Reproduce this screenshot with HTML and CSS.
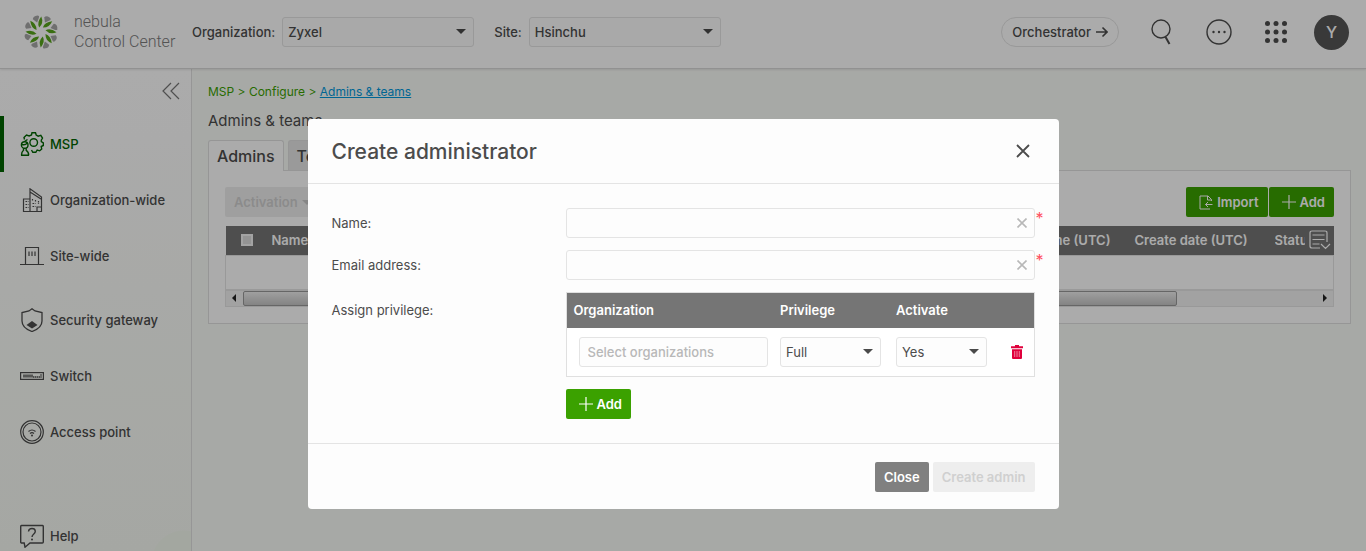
FILE: index.html
```
<!DOCTYPE html>
<html lang="en">
<head>
    <meta charset="UTF-8">
    <meta name="viewport" content="width=device-width, initial-scale=1.0">
    <title>Nebula Control Center</title>
    <link rel="stylesheet" href="styles.css">
</head>
<body>

    <!-- Top bar -->
    <header class="topbar">
        <a class="logo" href="#">
            <svg width="34" height="34" viewBox="-17 -17 34 34">
                <defs>
                    <g id="petal">
                        <path d="M3.200-14.800Q5.500-16.800 8.300-14.800T8.500-11.500L4-9.500Z" fill="#a6a6a6"/>
                        <path d="M.3-15.500Q3-9-1.800-4.500Q-4.500-9.500.3-15.500Z" fill="#57a51c"/>
                    </g>
                </defs>
                <use href="#petal"/>
                <use href="#petal" transform="rotate(45)"/>
                <use href="#petal" transform="rotate(90)"/>
                <use href="#petal" transform="rotate(135)"/>
                <use href="#petal" transform="rotate(180)"/>
                <use href="#petal" transform="rotate(225)"/>
                <use href="#petal" transform="rotate(270)"/>
                <use href="#petal" transform="rotate(315)"/>
            </svg>
            <span class="logo-text">nebula<br>Control Center</span>
        </a>
        <div class="picker">
            <label for="org">Organization:</label>
            <span class="select"><select id="org"><option>Zyxel</option></select></span>
        </div>
        <div class="picker">
            <label for="site">Site:</label>
            <span class="select"><select id="site"><option>Hsinchu</option></select></span>
        </div>
        <div class="tools">
            <button class="pill">Orchestrator
                <svg width="12" height="12" viewBox="0 0 12 12"><path d="M0 6h11M6.500 1.500L11 6l-4.500 4.500" fill="none" stroke="currentColor" stroke-width="1.600"/></svg>
            </button>
            <button class="icon-btn" aria-label="Search">
                <svg width="22" height="26" viewBox="0 0 22 26"><g fill="none" stroke="currentColor"><circle cx="10" cy="10" r="9" stroke-width="1.400"/><path d="M14.500 18l4 7" stroke-width="2"/></g></svg>
            </button>
            <button class="icon-btn" aria-label="More">
                <svg width="26" height="26" viewBox="0 0 26 26"><circle cx="13" cy="13" r="12" fill="none" stroke="currentColor" stroke-width="1.400"/><circle cx="7.500" cy="13" r="1.200"/><circle cx="13" cy="13" r="1.200"/><circle cx="18.500" cy="13" r="1.200"/></svg>
            </button>
            <button class="icon-btn" aria-label="Apps">
                <svg width="22" height="22" viewBox="0 0 22 22"><circle cx="2.500" cy="2.500" r="2.500"/><circle cx="11" cy="2.500" r="2.500"/><circle cx="19.500" cy="2.500" r="2.500"/><circle cx="2.500" cy="11" r="2.500"/><circle cx="11" cy="11" r="2.500"/><circle cx="19.500" cy="11" r="2.500"/><circle cx="2.500" cy="19.500" r="2.500"/><circle cx="11" cy="19.500" r="2.500"/><circle cx="19.500" cy="19.500" r="2.500"/></svg>
            </button>
            <button class="avatar">Y</button>
        </div>
    </header>

    <div class="layout">

        <!-- Sidebar -->
        <nav class="sidebar">
            <button class="collapse" aria-label="Collapse menu">
                <svg width="18" height="18" viewBox="0 0 18 18"><path d="M9 1L1 9l8 8M17 1L9 9l8 8" fill="none" stroke="currentColor" stroke-width="1.200"/></svg>
            </button>
            <a class="item active" href="#">
                <svg width="24" height="24" viewBox="0 0 24 24"><g fill="none" stroke="currentColor" stroke-width="1.400"><path d="M4.500 7.500L4 5.500 6.500 3l2.700 1L11.500 3 12 .7h3.500L16.200 3l2 1.200 2.600-.8L22.500 6l-1.200 2.200v1.500l2 1.100v2.700l-2.100 1 .5 2.500-2 1.800-2.500-.8-1.400 2.300h-3L11.500 18"/><circle cx="13.700" cy="10.500" r="3.800"/><circle cx="4.700" cy="13" r="3.300"/><path d="M4.500 9.500l3-2M1.700 12.500q4 1 5.300-1.500M1.500 23.300q0-3.500 2-5v-2M8.700 23.300q0-3.500-2.500-5v-2M1 23.300h8"/></g></svg>
                MSP
            </a>
            <a class="item" href="#">
                <svg width="24" height="24" viewBox="0 0 24 24"><g fill="none" stroke="currentColor" stroke-width="1.200"><path d="M10 11H3.500v12.500h18V9L10 .8v22.700M10 4l11 7M17 23v-4h4"/><path d="M5.500 13.500h3M5.500 16.500h3M5.500 19.500h3M12.500 11v2M15.500 12v2M12.500 15.500h3M12.500 18.500h3M18.500 13v3" stroke-dasharray="1.500 .8"/></g></svg>
                Organization-wide
            </a>
            <a class="item" href="#">
                <svg width="24" height="24" viewBox="0 0 24 24"><g fill="none" stroke="currentColor" stroke-width="1.200"><path d="M0 20.500h24M5.500 20V3.500h13V20M9 7.500V12M12 7.500V12M15 7.500V12"/></g></svg>
                Site-wide
            </a>
            <a class="item group" href="#">
                <svg width="24" height="24" viewBox="0 0 24 24"><path d="M12 .8L15 3l7 1.500V13q0 7-10 10.500Q2 20 2 13V4.500L9 3z" fill="none" stroke="currentColor" stroke-width="1.300"/><path d="M12 13l5.500 4-5.500 3.500L6.500 17z"/></svg>
                Security gateway
            </a>
            <a class="item" href="#">
                <svg width="24" height="24" viewBox="0 0 24 24"><rect x=".6" y="8.600" width="22.800" height="6.800" fill="none" stroke="currentColor" stroke-width="1.200"/><path d="M3 12h10" stroke="currentColor" stroke-width="3" opacity=".7"/><path d="M13 13h7" stroke="currentColor" stroke-width="1.500" stroke-dasharray="1.500 .5"/><path d="M21 10v4" stroke="currentColor"/></svg>
                Switch
            </a>
            <a class="item" href="#">
                <svg width="24" height="24" viewBox="0 0 24 24"><g fill="none" stroke="currentColor" stroke-width="1.200"><circle cx="12" cy="12" r="11.300"/><circle cx="12" cy="12" r="9"/><path d="M8.500 11.500q3.500-3 7 0M10 13.500q2-1.600 4 0"/></g><circle cx="12" cy="15.500" r="1"/></svg>
                Access point
            </a>
            <a class="item help" href="#">
                <svg width="24" height="24" viewBox="0 0 24 24"><g fill="none" stroke="currentColor" stroke-width="1.400"><path d="M1.500 1.500h21a1 1 0 0 1 .8 1v15.500a1 1 0 0 1-1 1H10l-5 4.200-.8-4.200H1.700a1 1 0 0 1-1-1v-15.500a1 1 0 0 1 .8-1z"/><path d="M8.500 7.500q.3-3 3.500-3t3.300 2.800q0 1.500-1.500 2.700-1.800 1.400-1.800 3"/></g><circle cx="12" cy="15.500" r="1"/></svg>
                Help
            </a>
        </nav>

        <!-- Page content -->
        <main class="content">
            <div class="breadcrumb">MSP &gt; Configure &gt; <a href="#">Admins &amp; teams</a></div>
            <h1>Admins &amp; teams</h1>
            <div class="tabs">
                <button class="tab current">Admins</button>
                <button class="tab">Teams</button>
            </div>
            <section class="panel">
                <div class="toolbar">
                    <button class="btn disabled" disabled>Activation <span class="caret"></span></button>
                    <div class="toolbar-right">
                        <button class="btn green">
                            <svg width="14" height="15" viewBox="0 0 14 15"><path d="M12.500 6V4.500L9 1H1v13h10M8.500 1v4h4M13.500 9.500H6.500M9 7l-2.500 2.500L9 12" fill="none" stroke="currentColor"/></svg>
                            Import
                        </button>
                        <button class="btn green">
                            <svg width="14" height="14" viewBox="0 0 14 14"><path d="M7 0v14M0 7h14" stroke="currentColor" stroke-width="1.200"/></svg>
                            Add
                        </button>
                    </div>
                </div>
                <table class="admins">
                    <thead>
                        <tr>
                            <th class="col-check"><input type="checkbox" aria-label="Select all"></th>
                            <th>Name</th>
                            <th class="col-access">Last access time (UTC)</th>
                            <th class="col-create">Create date (UTC)</th>
                            <th class="col-status">Status</th>
                            <th class="col-menu">
                                <svg width="22" height="20" viewBox="0 0 22 20"><g fill="none" stroke="currentColor" stroke-width="1.200"><path d="M18 12V3q0-2-2-2H3Q1 1 1 3v13q0 2 2 2h8M3.500 5h12M3.500 9.500h12M3.500 14h7M12 14l4.500 4.500L21 14"/></g></svg>
                            </th>
                        </tr>
                    </thead>
                    <tbody>
                        <tr><td colspan="6"></td></tr>
                    </tbody>
                </table>
                <div class="scroller">
                    <span class="arrow left"></span>
                    <div class="track"><div class="thumb"></div></div>
                    <span class="arrow right"></span>
                </div>
            </section>
        </main>
    </div>

    <!-- Create administrator dialog -->
    <div class="overlay">
        <form class="modal" role="dialog" aria-labelledby="modal-title">
            <div class="modal-head">
                <h2 id="modal-title">Create administrator</h2>
                <button type="button" class="icon-btn" aria-label="Close dialog">
                    <svg width="14" height="14" viewBox="0 0 14 14"><path d="M1 1l12 12M13 1L1 13" stroke="currentColor" stroke-width="1.800"/></svg>
                </button>
            </div>
            <div class="modal-body">
                <label for="name">Name:</label>
                <div class="field required">
                    <input type="text" id="name">
                    <button type="button" class="clear" aria-label="Clear name"><svg width="10" height="10" viewBox="0 0 10 10"><path d="M.5.5l9 9M9.500.5l-9 9" stroke="currentColor" stroke-width="1.600"/></svg></button>
                </div>
                <label for="email">Email address:</label>
                <div class="field required">
                    <input type="text" id="email">
                    <button type="button" class="clear" aria-label="Clear email"><svg width="10" height="10" viewBox="0 0 10 10"><path d="M.5.5l9 9M9.500.5l-9 9" stroke="currentColor" stroke-width="1.600"/></svg></button>
                </div>
                <span class="privilege-label" id="privilege-label">Assign privilege:</span>
                <div>
                    <table class="privileges" aria-labelledby="privilege-label">
                        <thead>
                            <tr>
                                <th class="col-org">Organization</th>
                                <th class="col-priv">Privilege</th>
                                <th class="col-act">Activate</th>
                                <th></th>
                            </tr>
                        </thead>
                        <tbody>
                            <tr>
                                <td><input type="text" placeholder="Select organizations" aria-label="Organizations"></td>
                                <td><span class="select"><select aria-label="Privilege"><option>Full</option></select></span></td>
                                <td><span class="select narrow"><select aria-label="Activate"><option>Yes</option></select></span></td>
                                <td>
                                    <button type="button" class="icon-btn delete" aria-label="Delete">
                                        <svg width="12" height="14" viewBox="0 0 12 14"><path d="M4 0h4v1.300h4v2H0v-2h4zM1 4.300h10V13q0 1-1 1H2q-1 0-1-1z"/><path d="M3.700 6v6M6 6v6M8.300 6v6" stroke="#fff" stroke-width=".5"/></svg>
                                    </button>
                                </td>
                            </tr>
                        </tbody>
                    </table>
                    <button type="button" class="btn green">
                        <svg width="14" height="14" viewBox="0 0 14 14"><path d="M7 0v14M0 7h14" stroke="currentColor" stroke-width="1.200"/></svg>
                        Add
                    </button>
                </div>
            </div>
            <div class="modal-foot">
                <button type="button" class="btn gray">Close</button>
                <button type="submit" class="btn disabled" disabled>Create admin</button>
            </div>
        </form>
    </div>

</body>
</html>
```
FILE: styles.css
```
/* Global Styles */
* {
    margin: 0;
    padding: 0;
    box-sizing: border-box;
}

body {
    height: 100vh;
    overflow: hidden;
    display: flex;
    flex-direction: column;
    background: #fafcf8;
    color: #4c4c4c;
    font-family: Inter, "Liberation Sans", sans-serif;
    font-size: 13px;
    font-weight: 500;
}

button,
input,
select {
    font: inherit;
    color: inherit;
}

button {
    border: none;
    background: none;
    white-space: nowrap;
}

svg {
    display: block;
    flex: none;
    fill: currentColor;
}

/* Top bar */
.topbar {
    display: flex;
    align-items: center;
    flex: none;
    height: 69px;
    padding: 0 17px 4px 24px;
    background: #fff;
    border-bottom: 1px solid #d8d8d8;
    box-shadow: 0 1px 2px rgba(0, 0, 0, .1);
    z-index: 1;
}

.logo {
    display: flex;
    align-items: center;
    gap: 16px;
    width: 168px;
    color: #7c7c7c;
    text-decoration: none;
}

.logo-text {
    font-family: Roboto, sans-serif;
    font-size: 16px;
    font-weight: 300;
    line-height: 20px;
    white-space: nowrap;
}

.picker {
    display: flex;
    align-items: center;
    gap: 7px;
    margin-right: 20px;
}

.picker .select {
    width: 192px;
}

.select {
    display: block;
    position: relative;
}

.select::after,
.caret {
    content: "";
    border: 5px solid transparent;
    border-top-color: #4a4a4a;
    border-bottom: none;
}

.select::after {
    position: absolute;
    right: 8px;
    top: 12px;
    pointer-events: none;
}

select,
input[type="text"] {
    display: block;
    appearance: none;
    width: 100%;
    height: 30px;
    padding: 0 5px;
    background: #fdfdfd;
    border: 1px solid #e4e4e4;
    border-radius: 3px;
}

.tools {
    display: flex;
    align-items: center;
    margin-left: auto;
}

.pill {
    display: flex;
    align-items: center;
    gap: 5px;
    height: 30px;
    padding: 0 10px;
    margin-right: 32px;
    border: 1px solid #e4e4e4;
    border-radius: 15px;
}

.tools .icon-btn {
    margin-right: 33px;
}

.tools .icon-btn + .avatar {
    margin-left: -6px;
}

.avatar {
    width: 35px;
    height: 35px;
    border-radius: 50%;
    background: #555;
    color: #fff;
    font-size: 16px;
}

/* Sidebar */
.layout {
    display: flex;
    flex: 1;
    min-height: 0;
}

.sidebar {
    flex: none;
    width: 192px;
    background:
        radial-gradient(circle at 184px 494px, #f3f9ef 32px, transparent 33px),
        linear-gradient(#fff, #fefefe 70px, #fbfdf9 220px, #f7faf4);
    border-right: 1px solid #e0e0e0;
}

.collapse {
    display: block;
    margin: 13px 11px 16px auto;
    color: #777;
}

.item {
    display: flex;
    align-items: center;
    gap: 6px;
    height: 56px;
    padding-left: 20px;
    color: #4c4c4c;
    text-decoration: none;
}

.item.active {
    border-left: 4px solid #006400;
    padding-left: 16px;
    color: #006400;
}

.item.group {
    margin-top: 8px;
}

.item.help {
    margin-top: 48px;
}

/* Content */
.content {
    flex: 1;
    min-width: 0;
    padding: 14px 15px 0 16px;
}

.breadcrumb {
    color: #3ba100;
    font-size: 12px;
    font-weight: 400;
    line-height: 18px;
}

.breadcrumb a {
    color: #0099dc;
}

h1 {
    margin: 10px 0 9px;
    font-size: 15px;
    font-weight: 400;
    line-height: 20px;
}

.tabs {
    display: flex;
    gap: 4px;
}

.tab {
    height: 30px;
    padding: 0 8px;
    border: 1px solid #e0e0e0;
    border-bottom: none;
    border-radius: 3px 3px 0 0;
    background: #e6e6e6;
    font-size: 16px;
}

.tab.current {
    background: #fff;
    margin-bottom: -1px;
    height: 31px;
    z-index: 1;
}

.panel {
    padding: 16px;
    background: #fff;
    border: 1px solid #e0e0e0;
}

.toolbar {
    display: flex;
    justify-content: space-between;
    margin-bottom: 9px;
}

.toolbar-right {
    display: flex;
    gap: 1px;
}

.btn {
    display: flex;
    align-items: center;
    gap: 4px;
    height: 30px;
    padding: 0 9px;
    border-radius: 2px;
    font-weight: 600;
}

.btn.green {
    padding-left: 13px;
    background: #3ba100;
    color: #fff;
}

.btn.gray {
    background: #808080;
    color: #fff;
}

.btn.disabled {
    background: #eee;
    color: #d0d0d0;
}

.caret {
    border-top-color: #c8c8c8;
}

table {
    width: 100%;
    border-collapse: collapse;
    table-layout: fixed;
}

th {
    background: #757575;
    color: #fff;
    font-weight: 600;
    text-align: left;
    white-space: nowrap;
}

.admins th {
    height: 29px;
    overflow: hidden;
}

.admins td {
    height: 34px;
    border: 1px solid #e4e4e4;
}

.col-check {
    width: 46px;
    padding-left: 15px;
}

.col-check input {
    display: block;
    appearance: none;
    width: 12px;
    height: 12px;
    background: #ddd;
    border: 2px solid #f4f4f4;
}

.admins .col-access {
    width: 180px;
    padding-right: 16px;
    text-align: right;
}

.col-create {
    width: 148px;
    padding-left: 8px;
}

.col-status {
    width: 30px;
}

.col-menu {
    width: 29px;
    padding-left: 4px;
}

.scroller {
    display: flex;
    align-items: center;
    height: 17px;
    padding: 0 6px;
    background: #f2f2f2;
    border: 1px solid #e4e4e4;
}

.track {
    flex: 1;
    margin: 0 7px;
}

.thumb {
    width: 87%;
    height: 15px;
    background: linear-gradient(#eee, #c4c4c4);
    border: 1px solid #999;
    border-radius: 2px;
}

.arrow {
    border: 4px solid transparent;
}

.arrow.left {
    border-right-color: #222;
    border-left: none;
}

.arrow.right {
    border-left-color: #222;
    border-right: none;
}

/* Dialog */
.overlay {
    position: fixed;
    inset: 0;
    z-index: 10;
    padding-top: 119px;
    background: rgba(0, 0, 0, .33);
}

.modal {
    width: 751px;
    max-width: 100%;
    margin: 0 auto;
    background: #fdfdfd;
    border-radius: 4px;
}

.modal-head {
    display: flex;
    align-items: center;
    justify-content: space-between;
    height: 65px;
    padding: 0 29px 0 24px;
    border-bottom: 1px solid #e4e4e4;
}

h2 {
    font-size: 21px;
    font-weight: 500;
}

.modal-body {
    display: grid;
    grid-template-columns: 234px 1fr;
    row-gap: 12px;
    padding: 24px;
    font-weight: 400;
}

.modal-body label {
    line-height: 30px;
}

.privilege-label {
    line-height: 36px;
}

.field {
    position: relative;
}

.clear {
    position: absolute;
    right: 8px;
    top: 10px;
    color: #b8b8b8;
}

.required::after {
    content: "*";
    position: absolute;
    left: 100%;
    top: 0;
    margin-left: 1px;
    color: #ff5060;
    font-size: 16px;
}

.privileges {
    margin-bottom: 12px;
    background: #fff;
    border: 1px solid #e0e0e0;
}

.privileges th {
    height: 35px;
    padding-left: 7px;
}

.privileges td {
    height: 49px;
    padding-left: 7px;
}

.privileges td:first-child {
    padding: 0 5px 0 12px;
}

.privileges .select {
    width: 101px;
}

.privileges .select.narrow {
    width: 91px;
}

.privileges input {
    padding: 0 8px;
    font-weight: 500;
}

.privileges input::placeholder {
    color: #b8b8b8;
}

.col-org {
    width: 207px;
}

.col-priv {
    width: 116px;
}

.col-act {
    width: 115px;
}

.delete {
    display: block;
    color: #e0003c;
}

.modal-foot {
    display: flex;
    justify-content: flex-end;
    gap: 4px;
    padding: 18px 24px 17px;
    border-top: 1px solid #e4e4e4;
}
```
